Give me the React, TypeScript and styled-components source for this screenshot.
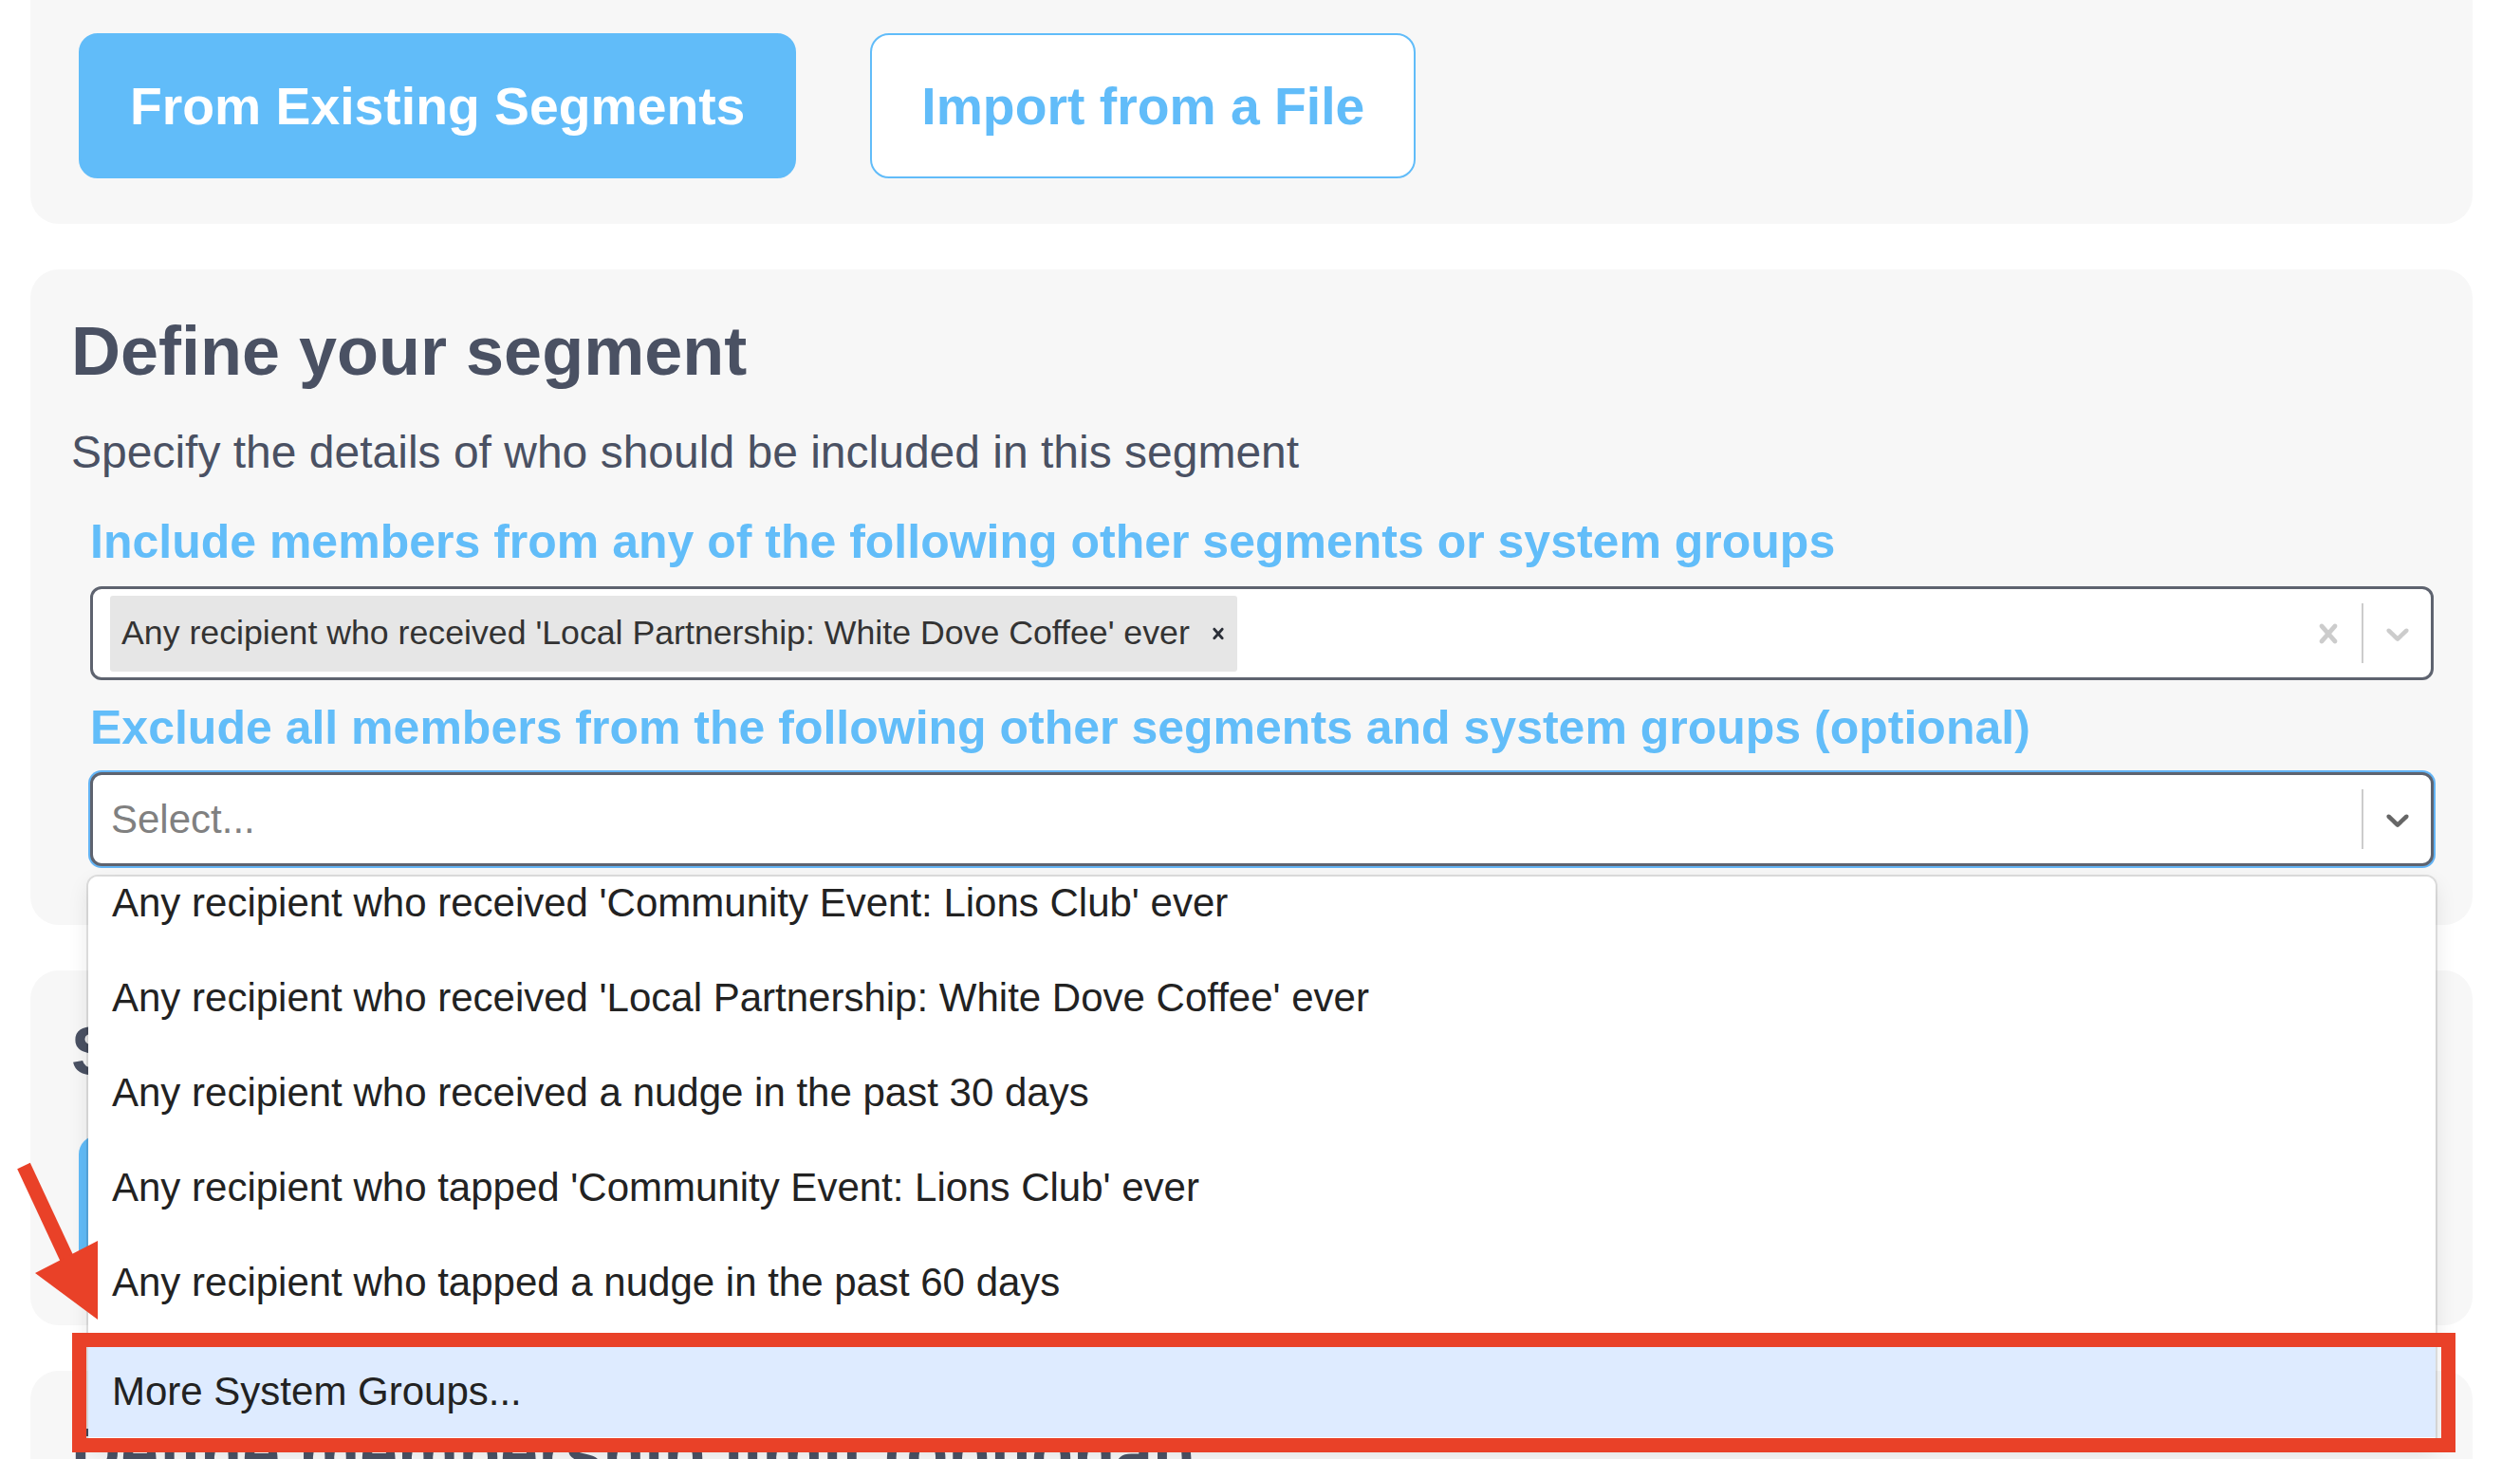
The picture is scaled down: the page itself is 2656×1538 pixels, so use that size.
import React from 'react'
import styled, { createGlobalStyle } from 'styled-components'

const FONT = `"Liberation Sans", Arial, Helvetica, sans-serif`
const BLUE = '#61bcf9'
const SLATE = '#4a5163'

const excludeOptions = [
  "Any recipient who received 'Community Event: Lions Club' ever",
  "Any recipient who received 'Local Partnership: White Dove Coffee' ever",
  'Any recipient who received a nudge in the past 30 days',
  "Any recipient who tapped 'Community Event: Lions Club' ever",
  'Any recipient who tapped a nudge in the past 60 days',
]

const CrossIcon = ({ size }: { size: number }) => (
  <svg width={size} height={size} viewBox="0 0 20 20" fill="currentColor">
    <path d="M14.348 14.849c-0.469 0.469-1.229 0.469-1.697 0l-2.651-3.030-2.651 3.029c-0.469 0.469-1.229 0.469-1.697 0-0.469-0.469-0.469-1.229 0-1.697l2.758-3.15-2.759-3.152c-0.469-0.469-0.469-1.228 0-1.697s1.228-0.469 1.697 0l2.652 3.031 2.651-3.031c0.469-0.469 1.228-0.469 1.697 0s0.469 1.229 0 1.697l-2.758 3.152 2.758 3.15c0.469 0.469 0.469 1.229 0 1.698z" />
  </svg>
)

const ChevronIcon = () => (
  <svg width={40} height={40} viewBox="0 0 20 20" fill="currentColor">
    <path d="M4.516 7.548c0.436-0.446 1.043-0.481 1.576 0l3.908 3.747 3.908-3.747c0.533-0.481 1.141-0.446 1.574 0 0.436 0.445 0.408 1.197 0 1.615-0.406 0.418-4.695 4.502-4.695 4.502-0.217 0.223-0.502 0.335-0.787 0.335s-0.57-0.112-0.789-0.335c0 0-4.287-4.084-4.695-4.502s-0.436-1.17 0-1.615z" />
  </svg>
)

const App = () => {
  return (
    <>
      <GlobalStyle />
      <Page>
        <Card variant="top">
          <ButtonRow>
            <ModeButton active>From Existing Segments</ModeButton>
            <ModeButton>Import from a File</ModeButton>
          </ButtonRow>
        </Card>

        <Card>
          <Heading>Define your segment</Heading>
          <Subtitle>Specify the details of who should be included in this segment</Subtitle>
          <Fields>
            <Field>
              <FieldLabel>Include members from any of the following other segments or system groups</FieldLabel>
              <Control>
                <ValueArea>
                  <Chip>
                    <ChipText>Any recipient who received 'Local Partnership: White Dove Coffee' ever</ChipText>
                    <ChipRemove><CrossIcon size={24} /></ChipRemove>
                  </Chip>
                </ValueArea>
                <Indicators>
                  <Indicator tone="#cccccc"><CrossIcon size={40} /></Indicator>
                  <Separator />
                  <Indicator tone="#cccccc"><ChevronIcon /></Indicator>
                </Indicators>
              </Control>
            </Field>
            <Field>
              <FieldLabel>Exclude all members from the following other segments and system groups (optional)</FieldLabel>
              <Control focused>
                <ValueArea>
                  <Placeholder>Select...</Placeholder>
                </ValueArea>
                <Indicators>
                  <Separator />
                  <Indicator tone="#666666"><ChevronIcon /></Indicator>
                </Indicators>
                <Menu>
                  <MenuList>
                    {excludeOptions.map((label) => (
                      <Option key={label}>{label}</Option>
                    ))}
                    <Option highlighted>More System Groups...</Option>
                  </MenuList>
                </Menu>
              </Control>
            </Field>
          </Fields>
        </Card>

        <Card variant="compact">
          <Heading>Segment size</Heading>
          <ButtonRow indent>
            <ModeButton active>Calculate Size</ModeButton>
          </ButtonRow>
        </Card>

        <Card>
          <Heading>Define membership limit (optional)</Heading>
          <Subtitle>Limit how many members can be included in this segment</Subtitle>
        </Card>

        <Annotation width="2656" height="1538" viewBox="0 0 2656 1538">
          <line x1="25" y1="1229" x2="73" y2="1332" stroke="#e94128" strokeWidth="15" />
          <polygon points="37,1342 103,1308 103,1391" fill="#e94128" />
          <rect x="83.5" y="1412.5" width="2497" height="111" fill="none" stroke="#e94128" strokeWidth="15" />
        </Annotation>
      </Page>
    </>
  )
}

export default App

const GlobalStyle = createGlobalStyle`
  html, body {
    margin:0;
    background:#fff;
    font-family:${FONT};
  }
`
const Page = styled.div`
  position:relative;
  display:flex;
  flex-direction:column;
  gap:48px;
  padding:0 50px 0 32px;
  height:1538px;
  overflow:hidden;
`
const Card = styled.section<{ variant?: 'top' | 'compact' }>`
  background:#f7f7f7;
  border-radius:${p => (p.variant === 'top' ? '0 0 30px 30px' : '30px')};
  padding:${p =>
    p.variant === 'top' ? '35px 41px 48px 51px' : p.variant === 'compact' ? '44px 41px 47px 43px' : '45px 41px 62px 43px'};
  flex-shrink:0;
`
const ButtonRow = styled.div<{ indent?: boolean }>`
  display:flex;
  gap:78px;
  margin-top:${p => (p.indent ? '47px' : '0')};
  padding-left:${p => (p.indent ? '8px' : '0')};
`
const ModeButton = styled.button<{ active?: boolean }>`
  height:153px;
  padding:0 52px;
  border-radius:20px;
  border:2px solid ${BLUE};
  background:${p => (p.active ? BLUE : '#fff')};
  color:${p => (p.active ? '#fff' : BLUE)};
  font-family:${FONT};
  font-size:55.3px;
  font-weight:bold;
`
const Heading = styled.h2`
  margin:0;
  font-size:72px;
  line-height:83px;
  font-weight:bold;
  color:${SLATE};
`
const Subtitle = styled.p`
  margin:37px 0 0;
  font-size:48px;
  line-height:55px;
  color:${SLATE};
`
const Fields = styled.div`
  display:flex;
  flex-direction:column;
  gap:22px;
  margin-top:39px;
  padding-left:20px;
`
const Field = styled.div`
  display:flex;
  flex-direction:column;
  gap:18px;
`
const FieldLabel = styled.label`
  font-size:50px;
  line-height:57px;
  font-weight:bold;
  color:#62bdf9;
`
const Control = styled.div<{ focused?: boolean }>`
  position:relative;
  display:flex;
  align-items:stretch;
  height:99px;
  box-sizing:border-box;
  background:#fff;
  border:3px solid #5e636f;
  border-radius:12px;
  box-shadow:${p => (p.focused ? '0 0 0 2px #63b4f5' : 'none')};
`
const ValueArea = styled.div`
  flex:1;
  display:flex;
  align-items:center;
  padding-left:18px;
`
const Chip = styled.div`
  display:flex;
  align-items:center;
  height:80px;
  padding:0 8px 0 12px;
  background:#e6e6e6;
  border-radius:3px;
`
const ChipText = styled.span`
  font-size:35.7px;
  color:#333;
  white-space:nowrap;
`
const ChipRemove = styled.span`
  display:flex;
  margin-left:18px;
  color:#2b2f38;
`
const Placeholder = styled.span`
  padding-left:1px;
  font-size:42px;
  color:#808080;
`
const Indicators = styled.div`
  display:flex;
  align-items:stretch;
`
const Indicator = styled.div<{ tone: string }>`
  display:flex;
  align-items:center;
  padding:0 15px 0 16px;
  color:${p => p.tone};
`
const Separator = styled.span`
  width:2px;
  margin:15px 0;
  background:#cccccc;
`
const Menu = styled.div`
  position:absolute;
  top:calc(100% + 14px);
  left:-5px;
  right:-5px;
  height:600px;
  background:#fff;
  border-radius:10px;
  box-shadow:0 0 0 2px rgba(0,0,0,0.1), 0 8px 22px rgba(0,0,0,0.1);
  overflow:hidden;
  z-index:5;
`
const MenuList = styled.div`
  display:flex;
  flex-direction:column;
  margin-top:-22px;
`
const Option = styled.div<{ highlighted?: boolean }>`
  display:flex;
  align-items:center;
  height:${p => (p.highlighted ? '97px' : '100px')};
  margin-top:${p => (p.highlighted ? '16px' : '0')};
  padding:0 25px;
  font-size:42px;
  color:#222;
  background:${p => (p.highlighted ? '#deebff' : '#fff')};
  white-space:nowrap;
`
const Annotation = styled.svg`
  position:absolute;
  top:0;
  left:0;
  pointer-events:none;
  z-index:20;
`
